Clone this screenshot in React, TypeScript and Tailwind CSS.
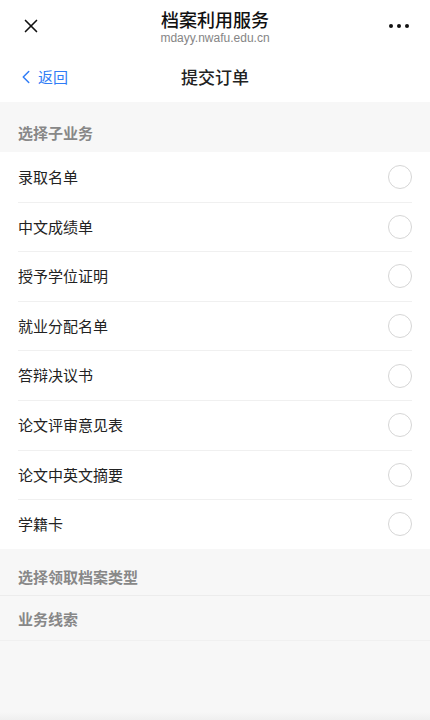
import { X, ChevronLeft } from "lucide-react";

const ITEMS = [
  "录取名单",
  "中文成绩单",
  "授予学位证明",
  "就业分配名单",
  "答辩决议书",
  "论文评审意见表",
  "论文中英文摘要",
  "学籍卡",
];

const FONT = { fontFamily: '"Noto Sans CJK SC", "Noto Sans", sans-serif' };

export default function App() {
  return (
    <div className="flex h-[720px] w-[430px] flex-col bg-[#f7f7f7]" style={FONT}>
      {/* 顶部栏 */}
      <div className="relative flex h-[52px] items-center justify-between bg-white px-5">
        <X size={22} strokeWidth={1.8} className="text-[#111]" />
        <div className="absolute left-0 right-0 top-[8px] flex flex-col items-center">
          <span className="text-[18px] font-medium leading-[22px] text-[#111]">档案利用服务</span>
          <span
            className="mt-[1px] text-[12px] font-medium leading-[14px] text-[#858585]"
            style={{ fontFamily: '"Liberation Sans", Arial, sans-serif' }}
          >
            mdayy.nwafu.edu.cn
          </span>
        </div>
        <div className="flex items-center gap-[4px] pr-[1px]">
          <span className="h-[4px] w-[4px] rounded-full bg-[#111]" />
          <span className="h-[4px] w-[4px] rounded-full bg-[#111]" />
          <span className="h-[4px] w-[4px] rounded-full bg-[#111]" />
        </div>
      </div>

      {/* 导航栏 */}
      <div className="relative flex h-[50px] items-center bg-white px-[18px]">
        <div className="flex items-center text-[15px] text-[#2f7cf6]">
          <ChevronLeft size={22} strokeWidth={1.6} className="-ml-[3px]" />
          <span className="ml-[1px]">返回</span>
        </div>
        <span className="absolute left-0 right-0 text-center text-[17px] font-medium text-[#222]">提交订单</span>
      </div>

      {/* 选择子业务 */}
      <div className="px-[18px] pb-[9px] pt-[20px] text-[15px] font-bold leading-[21px] text-[#888]">选择子业务</div>
      <div className="bg-white px-[18px]">
        {ITEMS.map((item, i) => (
          <div
            key={item}
            className={`flex h-[49.6px] items-center justify-between ${i > 0 ? "border-t border-[#f0f0f0]" : ""}`}
          >
            <span className="text-[15px] text-[#222]">{item}</span>
            <span className="h-[24px] w-[24px] rounded-full border border-[#d6d6d6]" />
          </div>
        ))}
      </div>

      <div className="flex h-[47px] items-center border-b border-[#ececec] px-[18px] pt-[10px] text-[15px] font-bold text-[#888]">
        选择领取档案类型
      </div>
      <div className="flex h-[45px] items-center border-b border-[#f0f0f0] px-[18px] pt-[2px] text-[15px] font-bold text-[#888]">
        业务线索
      </div>
      <div className="flex-1" />
      <div className="h-[8px] bg-gradient-to-b from-[#f7f7f7] to-[#efefef]" />
    </div>
  );
}
